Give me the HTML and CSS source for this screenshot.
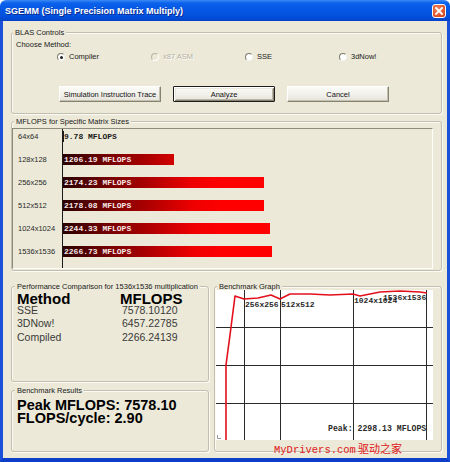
FILE: index.html
```html
<!DOCTYPE html>
<html>
<head>
<meta charset="utf-8">
<title>SGEMM</title>
<link rel="stylesheet" href="styles.css">
</head>
<body>
<div class="window">
  <div class="titlebar">
    <span class="title">SGEMM (Single Precision Matrix Multiply)</span>
    <span class="close"><svg width="12" height="12" viewBox="0 0 12 12"><path d="M3 3 L9 9 M9 3 L3 9" stroke="#fff" stroke-width="1.8" stroke-linecap="square"/></svg></span>
  </div>
  <div class="frame">
    <div class="group blas">
      <div class="legend">BLAS Controls</div>
      <div class="choose">Choose Method:</div>
      <div class="radios">
        <span class="radio"><span class="dot checked"></span>Compiler</span>
        <span class="radio disabled"><span class="dot"></span>x87 ASM</span>
        <span class="radio"><span class="dot"></span>SSE</span>
        <span class="radio"><span class="dot"></span>3dNow!</span>
      </div>
      <div class="buttons">
        <button class="btn">Simulation Instruction Trace</button>
        <button class="btn default">Analyze</button>
        <button class="btn">Cancel</button>
      </div>
    </div>

    <div class="group sizes">
      <div class="legend">MFLOPS for Specific Matrix Sizes</div>
      <div class="chart">
        <div class="labels">
          <div class="row">64x64</div>
          <div class="row">128x128</div>
          <div class="row">256x256</div>
          <div class="row">512x512</div>
          <div class="row">1024x1024</div>
          <div class="row">1536x1536</div>
        </div>
        <div class="bars">
          <div class="row"><div class="bar low" style="width:1px">9.78 MFLOPS</div></div>
          <div class="row"><div class="bar" style="width:111px">1206.19 MFLOPS</div></div>
          <div class="row"><div class="bar" style="width:201px">2174.23 MFLOPS</div></div>
          <div class="row"><div class="bar" style="width:201px">2178.08 MFLOPS</div></div>
          <div class="row"><div class="bar" style="width:207px">2244.33 MFLOPS</div></div>
          <div class="row"><div class="bar" style="width:209px">2266.73 MFLOPS</div></div>
        </div>
      </div>
    </div>

    <div class="bottom">
      <div class="leftcol">
        <div class="group perf">
          <div class="legend">Performance Comparison for 1536x1536 multiplication</div>
          <div class="table">
            <div class="th">Method</div><div class="th">MFLOPS</div>
            <div class="td">SSE</div><div class="td num">7578.10120</div>
            <div class="td">3DNow!</div><div class="td num">6457.22785</div>
            <div class="td">Compiled</div><div class="td num">2266.24139</div>
          </div>
        </div>
        <div class="group results">
          <div class="legend">Benchmark Results</div>
          <div class="big">Peak MFLOPS: 7578.10</div>
          <div class="big">FLOPS/cycle: 2.90</div>
        </div>
      </div>
      <div class="group graph">
        <div class="legend">Benchmark Graph</div>
        <div class="plot">
          <svg width="217" height="150" viewBox="0 0 217 150">
            <g stroke="#2a2a2a" stroke-width="1" shape-rendering="crispEdges">
              <line x1="0" y1="37.5" x2="217" y2="37.5"/>
              <line x1="0" y1="75.5" x2="217" y2="75.5"/>
              <line x1="0" y1="113.5" x2="217" y2="113.5"/>
              <line x1="28.5" y1="0" x2="28.5" y2="150"/>
              <line x1="64.5" y1="0" x2="64.5" y2="150"/>
              <line x1="137.5" y1="0" x2="137.5" y2="150"/>
              <line x1="210.5" y1="0" x2="210.5" y2="150"/>
            </g>
            <path d="M1.5 145 V148.5 H5" stroke="#9a9a9a" fill="none"/>
            <polyline fill="none" stroke="#e3101c" stroke-width="1.6" stroke-linejoin="round" points="10,150 10,75 14,45 19,6 28,9 42,8 55,5 64,9 74,4 94,4 114,5 137,4 144,6 164,2 184,1 204,2 211,3"/>
            <text class="gtext" x="29" y="16.5">256x256</text>
            <text class="gtext" x="65" y="16.5">512x512</text>
            <text class="gtext" x="167" y="10.2">1536x1536</text>
            <text class="gtext" x="138" y="12.5">1024x1024</text>
            <text class="gtext peak" x="112" y="140.8">Peak: 2298.13 MFLOPS</text>
          </svg>
        </div>
        <div class="watermark"><span class="wm-latin">MyDrivers.com</span> <span class="wm-cjk">驱动之家</span></div>
      </div>
    </div>
  </div>
</div>
</body>
</html>
```

FILE: styles.css
```css
* { box-sizing: border-box; }
html, body { margin: 0; padding: 0; }
body {
  width: 450px;
  height: 462px;
  overflow: hidden;
  font-family: "Liberation Sans", Arial, sans-serif;
  font-size: 7.5px;
  color: #1a1a1a;
}
.window {
  width: 450px;
  height: 462px;
  display: flex;
  flex-direction: column;
}
.titlebar {
  height: 21px;
  flex: none;
  display: flex;
  align-items: center;
  justify-content: space-between;
  padding: 1px 4px 0 5px;
  background: linear-gradient(to bottom, #3d8af7 0px, #0b62ea 3px, #0558e6 9px, #0452df 15px, #0349d3 19px, #0240c4 21px);
  border-radius: 6px 6px 0 0;
}
.title {
  color: #fff;
  font-weight: bold;
  font-size: 9px;
  line-height: 12px;
  text-shadow: 1px 1px 0 #0b2a8c;
  white-space: nowrap;
}
.close {
  width: 14px;
  height: 14px;
  border: 1px solid #fff;
  border-radius: 3px;
  background: radial-gradient(circle at 40% 35%, #f08a62 0%, #e2582e 55%, #c9401c 100%);
  display: flex;
  align-items: center;
  justify-content: center;
}
.close svg { display: block; }

.frame {
  flex: 1;
  background: #ece9d8;
  border-left: 3px solid #1b50d8;
  border-right: 3px solid #1b50d8;
  border-bottom: 4px solid #0c3ec9;
  padding: 11px 5px 0 8px;
  display: flex;
  flex-direction: column;
}

.group {
  border: 1px solid #c2bfae;
  border-radius: 3px;
  box-shadow: inset 1px 1px 0 #fbfaf5, 1px 1px 0 #fbfaf5;
}
.legend {
  display: block;
  width: max-content;
  height: 8px;
  line-height: 8px;
  margin-top: -4px;
  padding: 0 2px;
  background: #ece9d8;
  color: #1a1a1a;
  font-size: 7.5px;
  white-space: nowrap;
}

/* BLAS */
.blas {
  height: 82px;
  flex: none;
  padding-left: 4px;
}
.blas .legend { margin-left: -3px; }
.choose {
  margin-top: 3px;
  line-height: 10px;
  height: 10px;
}
.radios {
  margin-top: 2px;
  padding-left: 41px;
  display: flex;
  height: 10px;
  line-height: 10px;
}
.radio {
  width: 94px;
  display: flex;
  align-items: center;
  gap: 4px;
  color: #1a1a1a;
}
.radio.disabled {
  color: #b3b0a1;
  text-shadow: 1px 1px 0 #fff;
}
.dot {
  width: 8px;
  height: 8px;
  border-radius: 50%;
  border: 1px solid;
  border-color: #7c7a6c #f4f3ee #f4f3ee #7c7a6c;
  background: #fff;
  display: flex;
  align-items: center;
  justify-content: center;
  flex: none;
}
.disabled .dot { background: #ece9d8; border-color: #b9b6a7 #fff #fff #b9b6a7; }
.dot.checked::after {
  content: "";
  width: 3px;
  height: 3px;
  border-radius: 50%;
  background: #222;
}
.buttons {
  margin-top: 24px;
  padding-left: 43px;
  display: flex;
  gap: 12px;
}
.btn {
  width: 102px;
  height: 16px;
  margin: 0;
  padding: 0;
  font-family: "Liberation Sans", Arial, sans-serif;
  font-size: 7.5px;
  color: #111;
  background: linear-gradient(to bottom, #fbfbf8, #f0efe9 60%, #e4e2d8);
  border: 1px solid;
  border-color: #fefefe #85826f #85826f #fefefe;
  box-shadow: inset -1px -1px 0 #c4c1b1;
  border-radius: 1px;
}
.btn.default {
  border: 1px solid #1c1c1c;
  box-shadow: inset 1px 1px 0 #fff, inset -1px -1px 0 #85826f, inset 2px 2px 0 #e9e7de, inset -2px -2px 0 #b8b5a6;
}

/* Sizes chart */
.sizes {
  margin-top: 7px;
  height: 150px;
  flex: none;
  padding: 0 8px 1px 0;
  display: flex;
  flex-direction: column;
}
.sizes .legend { margin-left: 2px; }
.chart {
  margin-top: 2px;
  flex: 1;
  display: flex;
  border: 1px solid;
  border-color: #8d8b7c #fdfdfa #fdfdfa #8d8b7c;
}
.labels {
  width: 49px;
  padding: 2px 0 0 5px;
  display: flex;
  flex-direction: column;
  gap: 12px;
  color: #2a2a2a;
}
.labels .row { height: 11px; line-height: 11px; white-space: nowrap; }
.bars {
  flex: 1;
  border-left: 1px solid #1a1a1a;
  padding-top: 2px;
  display: flex;
  flex-direction: column;
  gap: 12px;
}
.bars .row { height: 11px; }
.bar {
  height: 11px;
  line-height: 11px;
  padding-left: 1px;
  white-space: nowrap;
  overflow: visible;
  font-family: "Liberation Mono", "Courier New", monospace;
  font-weight: bold;
  font-size: 8px;
  color: #f6e8e8;
  background-image: linear-gradient(to right, #2a0000 0px, #6e0000 40px, #b40000 90px, #ee0000 130px, #ff0000 160px, #ff0000 209px);
  background-size: 209px 100%;
  background-repeat: no-repeat;
}
.bar.low {
  color: #1a1a1a;
  background: #1a1a1a;
}

/* Bottom */
.bottom {
  margin-top: 15px;
  height: 166px;
  flex: none;
  display: flex;
  gap: 5px;
}
.leftcol {
  width: 198px;
  display: flex;
  flex-direction: column;
  gap: 8px;
}
.perf {
  height: 96px;
  padding-left: 5px;
}
.perf .legend, .results .legend { margin-left: -2px; }
.table {
  margin-top: 2px;
  display: grid;
  grid-template-columns: 103px auto;
}
.th {
  font-weight: bold;
  font-size: 15px;
  line-height: 11px;
  color: #000;
}
.td {
  font-size: 10.5px;
  line-height: 13.3px;
  color: #3a3a3a;
}
.td.num { padding-left: 2px; }
.results {
  height: 62px;
  padding-left: 5px;
}
.big {
  font-weight: bold;
  font-size: 14.5px;
  line-height: 13px;
  color: #000;
  white-space: nowrap;
}
.results .legend + .big { margin-top: 3.5px; }

.graph {
  width: 228px;
  height: 166px;
  padding-left: 1px;
  position: relative;
}
.graph .legend { margin-left: 1px; }
.plot {
  margin-top: -1px;
  width: 217px;
  height: 150px;
  background: #fff;
}
.plot svg { display: block; }
.gtext {
  font-family: "Liberation Mono", "Courier New", monospace;
  font-size: 8px;
  font-weight: bold;
  fill: #2a2a2a;
}
.gtext.peak { font-size: 8.2px; }
.watermark {
  position: absolute;
  left: 59px;
  top: 154px;
  line-height: 14px;
  color: #e01818;
  white-space: nowrap;
}
.wm-latin {
  font-family: "Liberation Mono", "Courier New", monospace;
  font-size: 10.5px;
}
.wm-cjk {
  font-family: "Noto Sans CJK SC", sans-serif;
  font-size: 11px;
}
```
